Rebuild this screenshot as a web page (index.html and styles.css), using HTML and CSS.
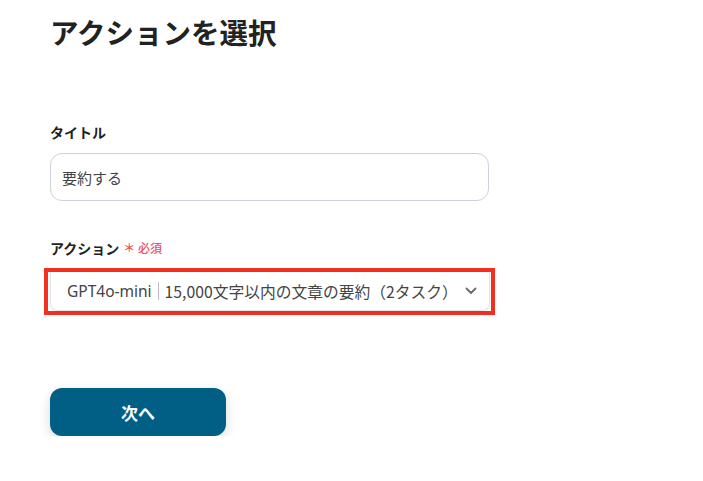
FILE: index.html
```html
<!DOCTYPE html>
<html lang="ja">
<head>
<meta charset="utf-8">
<link rel="stylesheet" href="styles.css">
</head>
<body>
<main class="page">
  <h1 class="title">アクションを選択</h1>
  <div class="field field-title">
    <div class="label">タイトル</div>
    <div class="input">要約する</div>
  </div>
  <div class="field field-action">
    <div class="label">アクション<span class="req">＊ 必須</span></div>
    <div class="highlight">
      <div class="select">
        <span class="model">GPT4o-mini</span><span class="sep"></span><span class="desc">15,000文字以内の文章の要約（2タスク）</span>
        <svg class="chev" width="12" height="8" viewBox="0 0 12 8"><path d="M1.5 1.5 L6 6 L10.5 1.5" fill="none" stroke="#6a6a6a" stroke-width="1.8" stroke-linecap="round" stroke-linejoin="round"/></svg>
      </div>
    </div>
  </div>
  <button class="next">次へ</button>
</main>
</body>
</html>
```

FILE: styles.css
```css
html, body {
  margin: 0;
  padding: 0;
  background: #ffffff;
}
body {
  font-family: "Noto Sans", "Noto Sans CJK JP", sans-serif;
  color: #222;
}
.page {
  padding: 12px 0 0 50px;
  display: flex;
  flex-direction: column;
  align-items: flex-start;
}
.title {
  margin: 0;
  font-size: 28.5px;
  line-height: 40px;
  font-weight: 700;
  color: #222;
  font-family: "Noto Sans CJK JP", sans-serif;
}
.field {
  display: flex;
  flex-direction: column;
}
.field-title {
  margin-top: 70px;
}
.field-action {
  margin-top: 37px;
  margin-left: -6px;
}
.field-action .label {
  margin-left: 6px;
}
.label {
  font-family: "Noto Sans CJK JP", sans-serif;
  font-size: 14px;
  line-height: 20px;
  font-weight: 700;
  color: #222;
  display: flex;
  align-items: center;
}
.req {
  color: #e8525a;
  font-size: 12px;
  font-weight: 500;
  margin-left: 4px;
}
.input {
  margin-top: 11px;
  width: 415px;
  height: 46px;
  border: 1px solid #cfd1dc;
  border-radius: 12px;
  padding: 0 11px;
  display: flex;
  align-items: center;
  font-family: "Noto Sans CJK JP", sans-serif;
  font-size: 15px;
  color: #444;
}
.highlight {
  margin-top: 10px;
  width: 441px;
  height: 39px;
  border: 4px solid #f2301f;
  padding: 0 0 0 2px;
  display: flex;
}
.select {
  flex: 1;
  margin-right: 1px;
  border: 1px solid #e3e3ea;
  border-top: none;
  border-radius: 0 0 8px 8px;
  box-shadow: 0 1px 3px rgba(0,0,0,0.08);
  display: flex;
  align-items: center;
  padding: 0 0 0 16px;
  font-family: "Noto Sans CJK JP", sans-serif;
  font-size: 15.75px;
  color: #444;
  white-space: nowrap;
}
.model {
  font-family: "Noto Sans", sans-serif;
  font-size: 15.5px;
}
.sep {
  width: 1px;
  height: 18px;
  background: #c6b8cc;
  margin: 0 6px 0 6px;
}
.chev {
  margin-left: 7px;
}
.next {
  margin-top: 73px;
  width: 176px;
  height: 48px;
  border: none;
  border-radius: 12px;
  background: #015f86;
  color: #fff;
  font-family: "Noto Sans CJK JP", sans-serif;
  font-size: 17px;
  font-weight: 700;
  box-shadow: 0 4px 12px rgba(0,0,0,0.15);
  cursor: pointer;
}
```
